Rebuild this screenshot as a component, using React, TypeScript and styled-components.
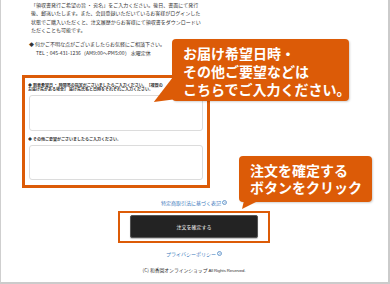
import React from "react";
import styled, { createGlobalStyle } from "styled-components";

const GlobalStyle = createGlobalStyle`
  html, body { margin: 0; padding: 0; background: #fff; }
  body { font-family: "Noto Sans CJK JP", "Noto Sans", sans-serif; color: #333; }
`;

const ORANGE = "#dc5b07";
const BLUE = "#3a78bb";

const Frame = styled.div`
  position: relative;
  box-sizing: border-box;
  width: 390px;
  height: 284px;
  overflow: hidden;
  border-left: 1px solid #cfcfcf;
  border-right: 2px solid #cbcbcb;
  border-bottom: 2px solid #cbcbcb;
  background: #fff;
`;

const Notice = styled.div`
  padding: 1px 0 0 30px;
  font-size: 5px;
  line-height: 8.4px;
  white-space: nowrap;
`;

const NoticeLine = styled.div``;

const Contact = styled.div`
  margin-top: 4px;
  padding-left: 28px;
  font-size: 5px;
  line-height: 9px;
  white-space: nowrap;
`;

const ContactLine = styled.div<{ $indent?: boolean }>`
  padding-left: ${(p) => (p.$indent ? "7px" : "0")};
`;

const FormBox = styled.div`
  box-sizing: border-box;
  margin: 18px 0 0 21px;
  width: 188px;
  border: 3px solid ${ORANGE};
  padding: 5px 4px 5px 3px;
  display: flex;
  flex-direction: column;
`;

const FieldLabel = styled.div<{ $top?: number }>`
  margin-top: ${(p) => p.$top ?? 0}px;
  font-size: 4px;
  line-height: 4.4px;
  font-weight: 700;
  white-space: nowrap;
  overflow: hidden;
  color: #333;
`;

const TextBox = styled.textarea<{ $h: number; $top: number }>`
  display: block;
  box-sizing: border-box;
  margin: ${(p) => p.$top}px 0 0 1px;
  width: 174px;
  height: ${(p) => p.$h}px;
  border: 1px solid #dcdcdc;
  border-radius: 3px;
  background: #fff;
  resize: none;
  padding: 0;
  outline: none;
`;

const Center = styled.div`
  display: flex;
  flex-direction: column;
  align-items: center;
  padding-right: 1px;
`;

const LinkRow = styled.a<{ $top: number }>`
  display: flex;
  align-items: center;
  gap: 1px;
  margin-top: ${(p) => p.$top}px;
  font-size: 5px;
  line-height: 6px;
  color: ${BLUE};
  text-decoration: none;
  white-space: nowrap;
`;

const ButtonFrame = styled.div`
  margin-top: 5px;
  box-sizing: border-box;
  width: 152px;
  height: 32px;
  border: 2px solid ${ORANGE};
  padding: 2px 10px 3px 10px;
  display: flex;
`;

const SubmitButton = styled.button`
  flex: 1;
  border: 1px solid #555;
  border-radius: 2px;
  background: #232323;
  color: #fff;
  font-family: "Noto Sans CJK JP", sans-serif;
  font-size: 5px;
  padding: 0;
  box-shadow: 0 1px 1px rgba(0, 0, 0, 0.25);
`;

const Copyright = styled.div`
  margin-top: 10px;
  font-size: 4.8px;
  line-height: 6px;
  color: #333;
  white-space: nowrap;
`;

const Latin = styled.span`
  font-family: "Liberation Sans", sans-serif;
  font-size: 4.3px;
  letter-spacing: -0.1px;
`;

const Callout = styled.div<{
  $left: number;
  $top: number;
  $w: number;
  $h: number;
  $lh: number;
  $pl: number;
  $pt: number;
}>`
  position: absolute;
  left: ${(p) => p.$left}px;
  top: ${(p) => p.$top}px;
  width: ${(p) => p.$w}px;
  height: ${(p) => p.$h}px;
  box-sizing: border-box;
  padding: ${(p) => p.$pt}px 0 0 ${(p) => p.$pl}px;
  background: ${ORANGE};
  border-radius: 4px;
  color: #fff;
  font-size: 14px;
  font-weight: 700;
  line-height: ${(p) => p.$lh}px;
  white-space: nowrap;
  box-shadow: 1px 1px 2px rgba(0, 0, 0, 0.18);
`;

const TailLeft = styled.span`
  position: absolute;
  left: -19px;
  top: 38px;
  width: 20px;
  height: 25px;
  background: ${ORANGE};
  clip-path: polygon(100% 0, 100% 90%, 4% 100%);
`;

const TailDown = styled.span`
  position: absolute;
  left: 3px;
  bottom: -7px;
  width: 16px;
  height: 8px;
  background: ${ORANGE};
  clip-path: polygon(12% 0, 100% 0, 0 100%);
`;

const LinkIcon = () => (
  <svg width="5" height="5" viewBox="0 0 10 10">
    <circle cx="5" cy="5" r="4" fill="none" stroke={BLUE} strokeWidth="1.4" />
    <path d="M4 3 L6 5 L4 7" fill="none" stroke={BLUE} strokeWidth="1.4" />
  </svg>
);

export default function App() {
  return (
    <>
      <GlobalStyle />
      <Frame>
        <Notice>
          <NoticeLine>「領収書発行ご希望の旨 ・ 宛名」をご入力ください。後日、書面にて発行</NoticeLine>
          <NoticeLine>後、郵送いたします。また、会員登録いただいているお客様がログインした</NoticeLine>
          <NoticeLine>状態でご購入いただくと、注文履歴からお客様にて領収書をダウンロードい</NoticeLine>
          <NoticeLine>ただくことも可能です。</NoticeLine>
        </Notice>
        <Contact>
          <ContactLine>◆ 何かご不明な点がございましたらお気軽にご相談下さい。</ContactLine>
          <ContactLine $indent>TEL：045-431-1236（AM9:00～PM5:00） 水曜定休</ContactLine>
        </Contact>

        <FormBox>
          <FieldLabel>
            ◆ 到着希望日 ・ 時間帯の指定がございましたらご入力ください。【複数の
            <br />
            お届け先がある場合】 届け先氏名と日時をそれぞれご入力ください。
          </FieldLabel>
          <TextBox $h={36} $top={4} readOnly />
          <FieldLabel $top={6}>◆ その他ご要望がございましたらご入力ください。</FieldLabel>
          <TextBox $h={35} $top={3} readOnly />
        </FormBox>

        <Center>
          <LinkRow $top={12}>
            特定商取引法に基づく表記
            <LinkIcon />
          </LinkRow>
          <ButtonFrame>
            <SubmitButton>注文を確定する</SubmitButton>
          </ButtonFrame>
          <LinkRow $top={8}>
            プライバシーポリシー
            <LinkIcon />
          </LinkRow>
          <Copyright>
            (C) 和香園オンラインショップ <Latin>All Rights Reserved.</Latin>
          </Copyright>
        </Center>

        <Callout $left={171} $top={39} $w={177} $h={62} $lh={18} $pl={11} $pt={5}>
          お届け希望日時・
          <br />
          その他ご要望などは
          <br />
          こちらでご入力ください。
          <TailLeft />
        </Callout>

        <Callout $left={238} $top={156} $w={133} $h={46} $lh={16.6} $pl={11} $pt={6}>
          注文を確定する
          <br />
          ボタンをクリック
          <TailDown />
        </Callout>
      </Frame>
    </>
  );
}
